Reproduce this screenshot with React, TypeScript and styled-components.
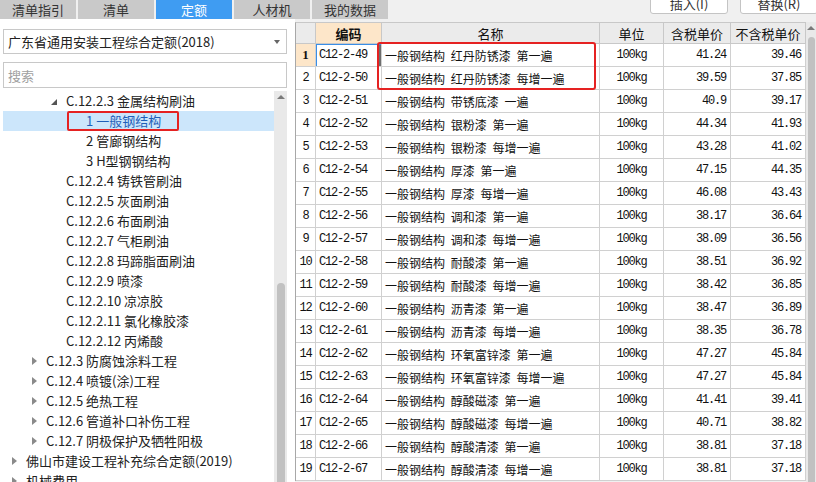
import React from "react";
import styled, { createGlobalStyle, css } from "styled-components";

const GlobalStyle = createGlobalStyle`
  html, body {
    margin: 0;
    padding: 0;
    overflow: hidden;
    background: #f0f0f0;
  }
  * { box-sizing: border-box; }
`;

const CJK = `"Noto Sans CJK SC", "Noto Sans", sans-serif`;
const MONO = `"Liberation Mono", "Noto Sans CJK SC", monospace`;

type TreeItem = {
  level: number;
  label: string;
  expanded?: boolean;
  selected?: boolean;
  marked?: boolean;
};

const tree: TreeItem[] = [
  { level: 2, label: "C.12.2.3 金属结构刷油", expanded: true },
  { level: 3, label: "1 一般钢结构", selected: true, marked: true },
  { level: 3, label: "2 管廊钢结构" },
  { level: 3, label: "3 H型钢钢结构" },
  { level: 2, label: "C.12.2.4 铸铁管刷油" },
  { level: 2, label: "C.12.2.5 灰面刷油" },
  { level: 2, label: "C.12.2.6 布面刷油" },
  { level: 2, label: "C.12.2.7 气柜刷油" },
  { level: 2, label: "C.12.2.8 玛蹄脂面刷油" },
  { level: 2, label: "C.12.2.9 喷漆" },
  { level: 2, label: "C.12.2.10 凉凉胶" },
  { level: 2, label: "C.12.2.11 氯化橡胶漆" },
  { level: 2, label: "C.12.2.12 丙烯酸" },
  { level: 1, label: "C.12.3 防腐蚀涂料工程", expanded: false },
  { level: 1, label: "C.12.4 喷镀(涂)工程", expanded: false },
  { level: 1, label: "C.12.5 绝热工程", expanded: false },
  { level: 1, label: "C.12.6 管道补口补伤工程", expanded: false },
  { level: 1, label: "C.12.7 阴极保护及牺牲阳极", expanded: false },
  { level: 0, label: "佛山市建设工程补充综合定额(2019)", expanded: false },
  { level: 0, label: "机械费用", expanded: false },
];

type Quota = [string, string, string, string];

const rows: Quota[] = [
  ["C12-2-49", "一般钢结构 红丹防锈漆 第一遍", "41.24", "39.46"],
  ["C12-2-50", "一般钢结构 红丹防锈漆 每增一遍", "39.59", "37.85"],
  ["C12-2-51", "一般钢结构 带锈底漆 一遍", "40.9", "39.17"],
  ["C12-2-52", "一般钢结构 银粉漆 第一遍", "44.34", "41.93"],
  ["C12-2-53", "一般钢结构 银粉漆 每增一遍", "43.28", "41.02"],
  ["C12-2-54", "一般钢结构 厚漆 第一遍", "47.15", "44.35"],
  ["C12-2-55", "一般钢结构 厚漆 每增一遍", "46.08", "43.43"],
  ["C12-2-56", "一般钢结构 调和漆 第一遍", "38.17", "36.64"],
  ["C12-2-57", "一般钢结构 调和漆 每增一遍", "38.09", "36.56"],
  ["C12-2-58", "一般钢结构 耐酸漆 第一遍", "38.51", "36.92"],
  ["C12-2-59", "一般钢结构 耐酸漆 每增一遍", "38.42", "36.85"],
  ["C12-2-60", "一般钢结构 沥青漆 第一遍", "38.47", "36.89"],
  ["C12-2-61", "一般钢结构 沥青漆 每增一遍", "38.35", "36.78"],
  ["C12-2-62", "一般钢结构 环氧富锌漆 第一遍", "47.27", "45.84"],
  ["C12-2-63", "一般钢结构 环氧富锌漆 每增一遍", "47.27", "45.84"],
  ["C12-2-64", "一般钢结构 醇酸磁漆 第一遍", "41.41", "39.41"],
  ["C12-2-65", "一般钢结构 醇酸磁漆 每增一遍", "40.71", "38.82"],
  ["C12-2-66", "一般钢结构 醇酸清漆 第一遍", "38.81", "37.18"],
  ["C12-2-67", "一般钢结构 醇酸清漆 每增一遍", "38.81", "37.18"],
];

const COLS = "20px 66px 218px 64px 67px 75px";

function App({ className }: { className?: string }) {
  return (
    <div className={className}>
      <GlobalStyle />
      <TabBar>
        <Tab>清单指引</Tab>
        <Tab>清单</Tab>
        <Tab $active>定额</Tab>
        <Tab>人材机</Tab>
        <Tab>我的数据</Tab>
        <TopButton style={{ marginLeft: "auto" }}>插入(I)</TopButton>
        <TopButton>替换(R)</TopButton>
      </TabBar>

      <Body>
        <LeftPanel>
          <Select>
            广东省通用安装工程综合定额(2018)
            <SelectArrow />
          </Select>
          <Search>搜索</Search>
          <TreeBox>
            <TreeList>
              {tree.map((item, i) => (
                <TreeRow key={i} $level={item.level} $selected={item.selected}>
                  <Toggle>
                    {item.expanded === true && <ExpandedMark />}
                    {item.expanded === false && <CollapsedMark />}
                  </Toggle>
                  {item.label}
                  {item.marked && <TreeMark />}
                </TreeRow>
              ))}
            </TreeList>
            <VScroll $thumbTop={192} $width={13} $thumbWidth={8}>
              <ScrollUp />
            </VScroll>
          </TreeBox>
        </LeftPanel>

        <Splitter />

        <RightPanel>
          <Grid>
            <GridRow $header>
              <HeadCell />
              <HeadCell $active>编码</HeadCell>
              <HeadCell>名称</HeadCell>
              <HeadCell>单位</HeadCell>
              <HeadCell>含税单价</HeadCell>
              <HeadCell>不含税单价</HeadCell>
            </GridRow>
            {rows.map((r, i) => (
              <GridRow key={r[0]}>
                <NumCell $active={i === 0}>{i + 1}</NumCell>
                <CodeCell $focus={i === 0}>{r[0]}</CodeCell>
                <NameCell>{r[1]}</NameCell>
                <UnitCell>100kg</UnitCell>
                <PriceCell>{r[2]}</PriceCell>
                <PriceCell>{r[3]}</PriceCell>
              </GridRow>
            ))}
            <GridMark />
          </Grid>
          <VScroll $thumbTop={15} $width={10} $thumbWidth={7}>
            <ScrollUp />
          </VScroll>
        </RightPanel>
      </Body>
    </div>
  );
}

const TabBar = styled.div`
  display: flex;
  gap: 2px;
  height: 19px;
  overflow: hidden;
  background: #f0f0f0;
`;

const Tab = styled.div<{ $active?: boolean }>`
  width: 76px;
  flex: none;
  height: 19px;
  display: flex;
  align-items: center;
  justify-content: center;
  font: 13px ${CJK};
  color: ${({ $active }) => ($active ? "#fff" : "#333")};
  background: ${({ $active }) => ($active ? "#3f9cf2" : "#c9c9c9")};
`;

const TopButton = styled.div`
  flex: none;
  width: 78px;
  height: 22px;
  margin-top: -8px;
  margin-left: 12px;
  margin-right: -2px;
  background: #fff;
  border: 1px solid #c4c4c4;
  border-radius: 3px;
  display: flex;
  align-items: center;
  justify-content: center;
  font: 13px ${CJK};
  color: #333;
`;

const Body = styled.div`
  display: flex;
  height: 463px;
`;

const LeftPanel = styled.div`
  width: 290px;
  flex: none;
  background: #fff;
  padding: 10px 3px 0;
  display: flex;
  flex-direction: column;
`;

const fieldBox = css`
  border: 1px solid #c8c8c8;
  background: #fff;
  display: flex;
  align-items: center;
  padding-left: 4px;
  font: 13px ${CJK};
`;

const Select = styled.div`
  ${fieldBox}
  height: 25px;
  color: #222;
  position: relative;
`;

const SelectArrow = styled.span`
  margin-left: auto;
  margin-right: 6px;
  width: 0;
  height: 0;
  border-left: 3.5px solid transparent;
  border-right: 3.5px solid transparent;
  border-top: 4px solid #666;
`;

const Search = styled.div`
  ${fieldBox}
  height: 26px;
  margin-top: 8px;
  color: #a0a0a0;
`;

const TreeBox = styled.div`
  flex: 1;
  margin-top: 3px;
  display: flex;
  min-height: 0;
  overflow: hidden;
`;

const TreeList = styled.div`
  flex: 1;
  overflow: hidden;
`;

const TreeRow = styled.div<{ $level: number; $selected?: boolean }>`
  position: relative;
  height: 20px;
  display: flex;
  align-items: center;
  padding-left: ${({ $level }) => 3 + $level * 20}px;
  font: 13px/20px ${CJK};
  white-space: nowrap;
  color: ${({ $selected }) => ($selected ? "#1f5fb8" : "#222")};
  background: ${({ $selected }) => ($selected ? "#cce6fb" : "transparent")};
`;

const Toggle = styled.span`
  width: 16px;
  margin-right: 4px;
  flex: none;
  display: flex;
  align-items: center;
  justify-content: center;
`;

const ExpandedMark = styled.span`
  width: 0;
  height: 0;
  border-left: 6px solid transparent;
  border-bottom: 6px solid #555;
  margin-top: 2px;
`;

const CollapsedMark = styled.span`
  width: 0;
  height: 0;
  border-top: 4px solid transparent;
  border-bottom: 4px solid transparent;
  border-left: 5px solid #8a8a8a;
`;

const TreeMark = styled.span`
  position: absolute;
  left: 64px;
  top: 0;
  width: 112px;
  height: 20px;
  border: 2px solid #e52222;
  border-radius: 2px;
`;

const VScroll = styled.div<{ $thumbTop: number; $width: number; $thumbWidth: number }>`
  position: relative;
  width: ${({ $width }) => $width}px;
  flex: none;
  background: #e9e9e9;
  &::after {
    content: "";
    position: absolute;
    top: ${({ $thumbTop }) => $thumbTop}px;
    bottom: -10px;
    right: ${({ $width, $thumbWidth }) => Math.floor(($width - $thumbWidth) / 2)}px;
    width: ${({ $thumbWidth }) => $thumbWidth}px;
    border-radius: 4px;
    background: #c1c1c1;
  }
`;

const ScrollUp = styled.span`
  position: absolute;
  top: 4px;
  left: 50%;
  margin-left: -4px;
  width: 0;
  height: 0;
  border-left: 4px solid transparent;
  border-right: 4px solid transparent;
  border-bottom: 4px solid #7a7a7a;
`;

const Splitter = styled.div`
  width: 5px;
  flex: none;
  background: #fff;
`;

const RightPanel = styled.div`
  flex: 1;
  display: flex;
  padding-top: 3px;
  background: #f0f0f0;
`;

const Grid = styled.div`
  position: relative;
  width: 511px;
  flex: none;
  align-self: flex-start;
  background: #fff;
  border-left: 1px solid #a8a8a8;
  border-top: 1px solid #c8c8c8;
`;

const GridRow = styled.div<{ $header?: boolean }>`
  display: grid;
  grid-template-columns: ${COLS};
  height: ${({ $header }) => ($header ? 21 : 23)}px;
`;

const cell = css`
  border-right: 1px solid #d0d0d0;
  border-bottom: 1px solid #d0d0d0;
  display: flex;
  align-items: center;
  white-space: nowrap;
  overflow: hidden;
  color: #111;
`;

const monoText = css`
  font: 12px ${MONO};
  letter-spacing: -1.2px;
`;

const HeadCell = styled.div<{ $active?: boolean }>`
  ${cell}
  border-color: #c8c8c8;
  justify-content: center;
  font: ${({ $active }) => ($active ? "bold" : "normal")} 13px ${CJK};
  background: ${({ $active }) => ($active ? "#fde6c9" : "#ebebeb")};
`;

const NumCell = styled.div<{ $active?: boolean }>`
  ${cell}
  justify-content: center;
  ${monoText}
  ${({ $active }) =>
    $active &&
    css`
      font: bold 13px "Liberation Serif", serif;
      letter-spacing: 0;
    `}
  background: ${({ $active }) => ($active ? "#fde6c9" : "#fff")};
`;

const CodeCell = styled.div<{ $focus?: boolean }>`
  ${cell}
  padding-left: 3px;
  ${monoText}
  ${({ $focus }) =>
    $focus &&
    css`
      box-shadow: inset 1px 1px 0 #3a8ee6, inset -2px 0 0 #6e6e6e;
    `}
`;

const NameCell = styled.div`
  ${cell}
  padding-left: 3px;
  font: 12px ${CJK};
  word-spacing: 3px;
`;

const UnitCell = styled.div`
  ${cell}
  justify-content: center;
  ${monoText}
`;

const PriceCell = styled.div`
  ${cell}
  justify-content: flex-end;
  padding-right: 4px;
  ${monoText}
`;

const GridMark = styled.div`
  position: absolute;
  left: 81px;
  top: 19px;
  width: 219px;
  height: 48px;
  border: 2px solid #e52222;
  border-radius: 3px;
`;

export default styled(App)`
  width: 816px;
  height: 482px;
  overflow: hidden;
  background: #f0f0f0;
`;
